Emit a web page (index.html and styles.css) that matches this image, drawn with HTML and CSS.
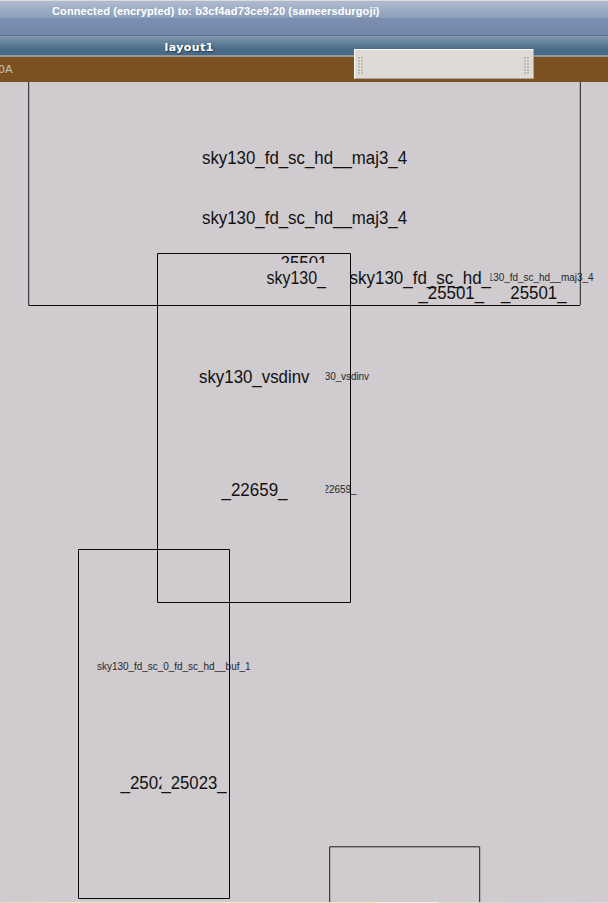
FILE: index.html
```html
<!DOCTYPE html>
<html lang="en">
<head>
<meta charset="utf-8">
<title>layout1</title>
<link rel="stylesheet" href="styles.css">
</head>
<body>
<div class="desktop">
  <header class="connection"><svg class="bar-text" width="608" height="32"><text x="52" y="14" textLength="327.500" class="status">Connected (encrypted) to: b3cf4ad73ce9:20 (sameersdurgoji)</text></svg></header>
  <div class="titlebar"><svg class="bar-text" width="608" height="19"><text x="164.500" y="15" textLength="49" class="title">layout1</text></svg></div>
  <div class="toolbar"><span class="tool-label">0A</span></div>
  <svg class="canvas" width="608" height="820" viewBox="0 82 608 820">
    <defs>
      <clipPath id="c1"><rect x="270" y="255" width="80" height="8"/></clipPath>
      <clipPath id="c2"><rect x="490.500" y="265" width="118" height="30"/></clipPath>
      <clipPath id="c3"><rect x="325.500" y="360" width="60" height="150"/></clipPath>
      <clipPath id="c4"><rect x="110" y="765" width="51.500" height="40"/></clipPath>
    </defs>
    <g class="large">
      <text x="202" y="163.500" textLength="205" lengthAdjust="spacingAndGlyphs">sky130_fd_sc_hd__maj3_4</text>
      <text x="202" y="223.500" textLength="205" lengthAdjust="spacingAndGlyphs">sky130_fd_sc_hd__maj3_4</text>
      <text x="280.500" y="268.500" textLength="47" lengthAdjust="spacingAndGlyphs" clip-path="url(#c1)">25501</text>
      <text x="266.500" y="283.700" textLength="59.500" lengthAdjust="spacingAndGlyphs">sky130_</text>
      <text x="349.500" y="283.700" textLength="141.500" lengthAdjust="spacingAndGlyphs">sky130_fd_sc_hd_</text>
      <text x="418.500" y="298.700" textLength="65.500" lengthAdjust="spacingAndGlyphs">_25501_</text>
      <text x="501" y="298.700" textLength="65.500" lengthAdjust="spacingAndGlyphs">_25501_</text>
      <text x="199" y="382.700" textLength="110.500" lengthAdjust="spacingAndGlyphs">sky130_vsdinv</text>
      <text x="221.500" y="496" textLength="66" lengthAdjust="spacingAndGlyphs">_22659_</text>
      <text x="120.500" y="789.300" textLength="66" lengthAdjust="spacingAndGlyphs" clip-path="url(#c4)">_25023_</text>
      <text x="161.500" y="789.300" textLength="65" lengthAdjust="spacingAndGlyphs">_25023_</text>
    </g>
    <g class="small">
      <text x="473" y="280.700" textLength="120.500" clip-path="url(#c2)">sky130_fd_sc_hd__maj3_4</text>
      <text x="304.500" y="380" textLength="64.500" clip-path="url(#c3)">sky130_vsdinv</text>
      <text x="318" y="493" textLength="38.500" clip-path="url(#c3)">_22659_</text>
      <text x="97" y="670.300" textLength="153.500">sky130_fd_sc_0_fd_sc_hd__buf_1</text>
    </g>
    <g class="cell">
      <path class="soft" d="M28.700 82V305M580.300 82V305"/>
      <path d="M28.500 305.500H580"/>
      <path d="M157.500 253.500H350.500V602.500H157.500Z"/>
      <path d="M78.500 549.500H229.500V898.500H78.500Z"/>
      <path class="soft" d="M329.700 902V846.800H479.700V902"/>
    </g>
  </svg>
  <div class="footer"></div>
  <div class="floating"><i class="grip"></i><i class="grip"></i></div>
</div>
</body>
</html>
```
FILE: styles.css
```css
body {
  margin: 0;
  background: #cfcbce;
}

.desktop {
  position: relative;
  width: 608px;
  height: 903px;
  overflow: hidden;
}

.connection {
  box-sizing: border-box;
  height: 36px;
  border-top: 1px solid #dadce0;
  border-bottom: 1px solid #5b708f;
  background: linear-gradient(#b0bbcf 0, #8b9eba 17px, #7b90b1 17px, #7187a9 100%);
}

.bar-text {
  display: block;
}

.status {
  font: bold 11px "Liberation Sans", sans-serif;
  fill: #fff;
}

.titlebar {
  box-sizing: border-box;
  height: 21px;
  border-bottom: 2px solid #949894;
  background: linear-gradient(#8197af 0, #496c87 13px, #47678a 100%);
}

.title {
  font: bold 11px "DejaVu Sans", sans-serif;
  fill: #fff;
  text-shadow: 1px 1px 1px #243b4b;
}

.toolbar {
  display: flex;
  align-items: center;
  height: 25px;
  background: #7b5122;
}

.tool-label {
  margin-left: -2px;
  font: 11px "DejaVu Sans", sans-serif;
  color: #c2c5b4;
}

.canvas {
  display: block;
}

.large {
  font: 18px "Liberation Sans", sans-serif;
  fill: #111;
}

.small {
  font: 10px "Liberation Sans", sans-serif;
  fill: #29272a;
}

.cell {
  fill: none;
  stroke: #09090c;
  stroke-width: 1;
}

.soft {
  stroke: #1c1c20;
}

.footer {
  height: 1px;
  background: linear-gradient(90deg, #dce3c8 0, #e3eeb5 80px, #e3eeb5 376px, #f2f2df 376px, #f2f2df 437px, #d4ebb9 437px, #bce2df 520px, #cfe0df 608px);
}

.floating {
  position: absolute;
  left: 354px;
  top: 49px;
  box-sizing: border-box;
  width: 180px;
  height: 30px;
  display: flex;
  justify-content: space-between;
  padding: 7px 3px 5px;
  border: 1px solid #fafafa;
  border-right-color: #aaa69f;
  border-bottom-color: #aaa69f;
  background: #dedbd6;
}

.grip {
  width: 6px;
  height: 17px;
  background: radial-gradient(circle at 1px 1px, #bbb8b3 0 0.8px, #f4f3f0 1px 1.5px, transparent 1.6px) 0 0 / 3px 3px;
}
```
